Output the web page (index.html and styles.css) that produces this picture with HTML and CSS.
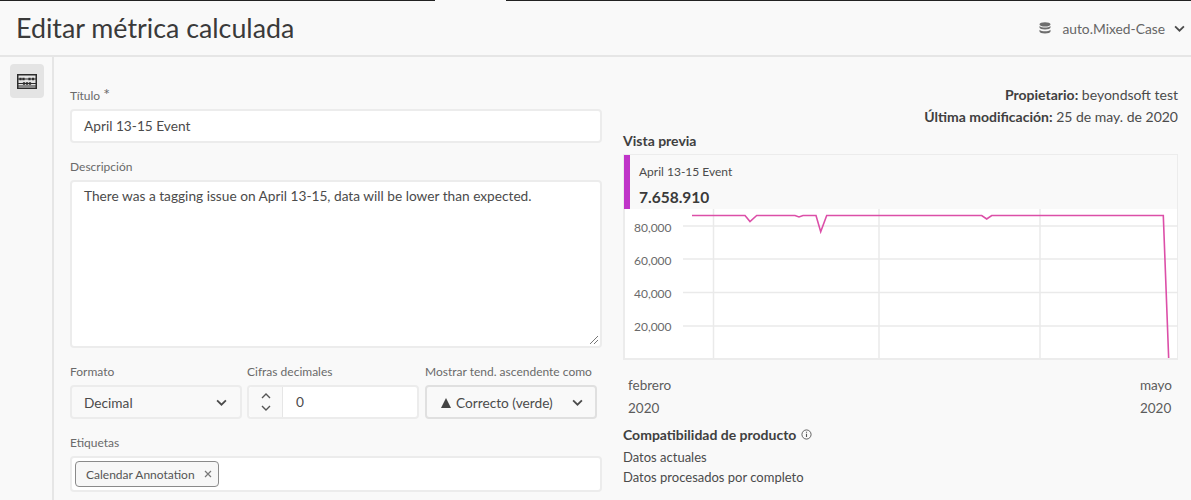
FILE: index.html
```html
<!DOCTYPE html>
<html lang="es">

<head>
    <meta charset="UTF-8">
    <title>Editar métrica calculada</title>
    <link rel="stylesheet" href="styles.css">
</head>

<body>
    <div class="topline"><span class="topgap"></span></div>

    <header class="header">
        <h1>Editar métrica calculada</h1>
        <div class="suite">
            <svg class="db_icon" viewBox="0 0 12 12" width="12" height="12">
                <ellipse cx="6" cy="2.400" rx="5.500" ry="2.200" fill="#6e6e6e"/>
                <path d="M.5 4v1.600c0 1.100 2.400 2 5.500 2s5.500-.9 5.500-2V4c-1 1-3.400 1.500-5.500 1.500S1.500 5 .5 4z"/>
                <path d="M.5 7.800v1.800c0 1.100 2.400 2 5.500 2s5.500-.9 5.500-2V7.800c-1 1-3.400 1.500-5.500 1.500s-4.500-.5-5.500-1.500z"/>
            </svg>
            <span>auto.Mixed-Case</span>
            <svg class="chev" viewBox="0 0 10 6" width="11" height="7"><path d="M1 1l4 4 4-4" /></svg>
        </div>
    </header>

    <div class="body">
        <aside class="side">
            <div class="side_btn">
                <svg viewBox="0 0 20 15" width="20" height="15">
                    <rect x=".75" y=".75" width="18.500" height="13.500" fill="none" stroke="#2c2c2c" stroke-width="1.500"/>
                    <path d="M1 5h18M1 9.500h18M1 12h18" stroke="#2c2c2c" stroke-width="1"/>
                    <path d="M3.500 3.800v2.400M6.500 3.800v2.400M12.500 3.800v2.400M16 3.800v2.400M7 8.300v2.400M10 8.300v2.400M13 8.300v2.400" stroke="#2c2c2c" stroke-width="2.200"/>
                </svg>
            </div>
        </aside>

        <main class="main">
            <section class="form">
                <label class="lbl lbl_first">Título <span class="req">*</span></label>
                <div class="field title_in">April 13-15 Event</div>

                <label class="lbl">Descripción</label>
                <div class="field desc">
                    There was a tagging issue on April 13-15, data will be lower than expected.
                    <svg class="grip" viewBox="0 0 10 10" width="10" height="10"><path d="M1 9l8-8M5 9l4-4" /></svg>
                </div>

                <div class="row3">
                    <div class="col_fmt">
                        <label class="lbl">Formato</label>
                        <div class="field select">Decimal
                            <svg class="chev big" viewBox="0 0 10 6" width="11" height="7"><path d="M1 1l4 4 4-4" /></svg>
                        </div>
                    </div>
                    <div class="col_dec">
                        <label class="lbl">Cifras decimales</label>
                        <div class="field stepper">
                            <div class="steps">
                                <svg viewBox="0 0 10 6" width="10" height="6"><path d="M1 5l4-4 4 4" /></svg>
                                <svg viewBox="0 0 10 6" width="10" height="6"><path d="M1 1l4 4 4-4" /></svg>
                            </div>
                            <div class="num">0</div>
                        </div>
                    </div>
                    <div class="col_trend">
                        <label class="lbl">Mostrar tend. ascendente como</label>
                        <div class="field select trend"><span><span class="tri"></span>Correcto (verde)</span>
                            <svg class="chev big" viewBox="0 0 10 6" width="11" height="7"><path d="M1 1l4 4 4-4" /></svg>
                        </div>
                    </div>
                </div>

                <label class="lbl">Etiquetas</label>
                <div class="field tags">
                    <span class="tag">Calendar Annotation
                        <svg viewBox="0 0 8 8" width="8" height="8"><path d="M1 1l6 6M7 1l-6 6" /></svg>
                    </span>
                </div>
            </section>

            <section class="right">
                <div class="meta">
                    <p><b>Propietario:</b> beyondsoft test</p>
                    <p><b>Última modificación:</b> 25 de may. de 2020</p>
                </div>
                <h2>Vista previa</h2>
                <div class="card">
                    <div class="card_head">
                        <div class="metric_name">April 13-15 Event</div>
                        <div class="metric_val">7.658.910</div>
                    </div>
                    <div class="plot">
                        <svg viewBox="0 0 553 149" width="553" height="149">
                            <g class="grid">
                                <path d="M58 17h495M58 50h495M58 83.500h495M58 117h495"/>
                                <path d="M88.500 0v149M254 0v149M415 0v149"/>
                            </g>
                            <g class="ticks">
                                <text x="9" y="22.500">80,000</text>
                                <text x="9" y="55.500">60,000</text>
                                <text x="9" y="89">40,000</text>
                                <text x="9" y="122">20,000</text>
                            </g>
                            <polyline class="line" points="67,6.500 120,6.500 125,12.500 131.700,6.500 170,6.500 174,8 178,6.500 191,6.500 195.700,22.700 201.700,6.500 356.700,6.500 361.700,10 366.700,6.500 538.300,6.500 543.700,150"/>
                        </svg>
                    </div>
                </div>
                <div class="axis">
                    <div><div>febrero</div><div>2020</div></div>
                    <div><div>mayo</div><div>2020</div></div>
                </div>
                <h3>Compatibilidad de producto
                    <svg class="info" viewBox="0 0 12 12" width="11" height="11"><circle cx="6" cy="6" r="5" fill="none" stroke="#555" stroke-width="1"/><path d="M6 5.200v3.500M6 3v1.200" stroke="#555" stroke-width="1.200"/></svg>
                </h3>
                <p class="compat">Datos actuales</p>
                <p class="compat">Datos procesados por completo</p>
            </section>
        </main>
    </div>
</body>

</html>
```

FILE: styles.css
```css
* {
    box-sizing: border-box;
    font-family: 'Lato', 'Open Sans', sans-serif;
}

html, body {
    margin: 0;
    height: 500px;
    overflow: hidden;
}

body {
    background-color: #f9f9f9;
    color: #4b4b4b;
}

.topline {
    height: 1px;
    background-color: #222;
    padding-left: 435px;
}

.topgap {
    display: block;
    width: 71px;
    height: 1px;
    background-color: #f9f9f9;
}

.header {
    height: 56px;
    border-bottom: 2px solid #e6e6e6;
    display: flex;
    justify-content: space-between;
    align-items: center;
    padding: 0 6px 0 16px;
}

h1 {
    margin: 0;
    font-size: 26.800px;
    font-weight: 400;
    color: #3a3a3a;
}

.suite {
    display: flex;
    align-items: center;
    font-size: 13.800px;
    color: #666;
}

.db_icon {
    margin-right: 11px;
}

svg path {
    fill: none;
}

.db_icon path {
    fill: #6e6e6e;
}

.chev {
    margin-left: 9px;
    stroke: #4b4b4b;
    stroke-width: 1.600;
}

.body {
    display: flex;
    height: 443px;
}

.side {
    width: 54px;
    flex-shrink: 0;
    border-right: 2px solid #e6e6e6;
    padding: 7px 0 0 10px;
}

.side_btn {
    width: 34px;
    height: 34px;
    background-color: #e4e4e4;
    border-radius: 4px;
    display: flex;
    align-items: center;
    justify-content: center;
}

.main {
    flex: 1;
    min-width: 0;
    display: flex;
    padding: 0 13px 0 16px;
}

.form {
    width: 532px;
    padding-top: 30px;
    margin-right: 21px;
    flex-shrink: 0;
}

.lbl {
    display: block;
    font-size: 12px;
    line-height: 16px;
    color: #6a6a6a;
    margin-bottom: 5px;
}

.lbl_first {
    padding-top: 1px;
    height: 17px;
}

.req {
    font-size: 16px;
    line-height: 0;
}

.field {
    background-color: #fff;
    border: 2px solid #ececec;
    border-radius: 4px;
    font-size: 13.700px;
    color: #4b4b4b;
}

.title_in {
    height: 34px;
    line-height: 29px;
    padding-left: 12px;
    margin-bottom: 16px;
}

.desc {
    height: 168px;
    padding: 4px 12px;
    line-height: 20px;
    position: relative;
    margin-bottom: 16px;
}

.grip {
    position: absolute;
    right: 1px;
    bottom: 1px;
    stroke: #777;
    stroke-width: 1;
}

.row3 {
    display: flex;
    margin-bottom: 16px;
}

.col_fmt {
    width: 172px;
    margin-right: 5px;
}

.col_dec {
    width: 172px;
    margin-right: 6px;
}

.col_trend {
    width: 172px;
}

.row3 .lbl {
    white-space: nowrap;
}

.select {
    background-color: #f9f9f9;
    height: 34px;
    display: flex;
    align-items: center;
    justify-content: space-between;
    padding: 0 13px 0 12px;
}

.trend {
    border-color: #e0e0e0;
    padding: 0 12px 0 14px;
}

.tri {
    display: inline-block;
    border-left: 5px solid transparent;
    border-right: 5px solid transparent;
    border-bottom: 10px solid #444;
    margin-right: 5px;
}

.stepper {
    height: 34px;
    display: flex;
}

.steps {
    width: 34px;
    background-color: #f9f9f9;
    border-right: 1px solid #e6e6e6;
    display: flex;
    flex-direction: column;
    align-items: center;
    justify-content: center;
    gap: 6px;
    stroke: #555;
    stroke-width: 1.400;
    border-radius: 4px 0 0 4px;
}

.num {
    padding-left: 13px;
    line-height: 30px;
}

.tags {
    height: 36px;
    padding: 3px;
    display: flex;
    align-items: center;
}

.tag {
    height: 26px;
    padding: 0 6px 0 10px;
    border: 1px solid #8a8a8a;
    border-radius: 4px;
    background-color: #f7f7f7;
    font-size: 12px;
    color: #555;
    display: flex;
    align-items: center;
    gap: 9px;
    stroke: #777;
    stroke-width: 1.200;
}

.right {
    flex: 1;
    min-width: 0;
}

.meta {
    text-align: right;
    font-size: 14px;
    padding-top: 27px;
    color: #4b4b4b;
}

.meta p {
    margin: 0;
    line-height: 22px;
}

.meta b, h2, h3 {
    font-weight: 700;
    color: #404040;
}

h2 {
    margin: 3px 0 3px;
    font-size: 14px;
    line-height: 20px;
}

.card {
    background-color: #fff;
    border: 2px solid #ececec;
    border-top-width: 1px;
    border-right-width: 1px;
    height: 206px;
}

.card_head {
    height: 54px;
    background-color: #f9f9f9;
    border-left: 6px solid #c035c9;
    margin-left: -1px;
    padding: 8px 0 0 9px;
}

.metric_name {
    font-size: 12px;
    line-height: 17px;
}

.metric_val {
    font-size: 15.500px;
    font-weight: 700;
    line-height: 20px;
    margin-top: 7px;
    color: #3a3a3a;
}

.plot svg {
    display: block;
}

.grid path {
    stroke: #eaeaea;
    stroke-width: 1.500;
}

.ticks text {
    font-size: 12px;
    fill: #6a6a6a;
}

.line {
    fill: none;
    stroke: #dc4fa8;
    stroke-width: 1.600;
}

.axis {
    display: flex;
    justify-content: space-between;
    font-size: 13.500px;
    line-height: 23px;
    padding: 14px 6px 0 5px;
    color: #5c5c5c;
}

h3 {
    margin: 5px 0 2px;
    font-size: 14px;
    line-height: 20px;
}

.info {
    margin-left: 1px;
}

.compat {
    margin: 0;
    font-size: 13px;
    line-height: 20px;
}
```
